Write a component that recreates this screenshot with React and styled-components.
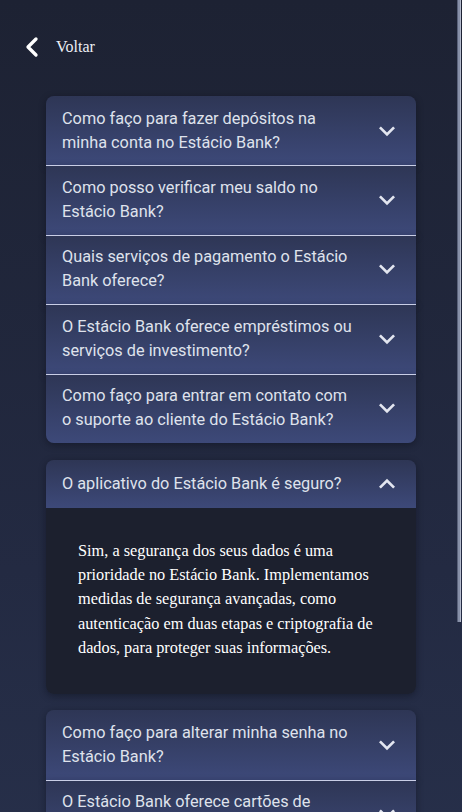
import React, { useState } from 'react';
import styled, { createGlobalStyle } from 'styled-components';
import { ChevronLeft } from 'lucide-react';

const GlobalStyle = createGlobalStyle`
  html {
    background: linear-gradient(180deg, #1d2233 0%, #232a42 55%, #29334f 100%);
    min-height: 100%;
  }
  body {
    margin: 0;
    font-family: "Liberation Serif", serif;
  }
  html::-webkit-scrollbar {
    display: none;
  }
`;

const faqs = [
  {
    q: 'Como faço para fazer depósitos na minha conta no Estácio Bank?',
    a: 'Você pode fazer depósitos por transferência, boleto ou Pix diretamente pelo aplicativo do Estácio Bank.'
  },
  {
    q: 'Como posso verificar meu saldo no Estácio Bank?',
    a: 'Seu saldo aparece na tela inicial do aplicativo, logo após o login.'
  },
  {
    q: 'Quais serviços de pagamento o Estácio Bank oferece?',
    a: 'Pix, boletos, transferências e pagamento de contas de consumo.'
  },
  {
    q: 'O Estácio Bank oferece empréstimos ou serviços de investimento?',
    a: 'Sim, consulte a área de produtos no aplicativo para conhecer as opções disponíveis.'
  },
  {
    q: 'Como faço para entrar em contato com o suporte ao cliente do Estácio Bank?',
    a: 'Pelo chat do aplicativo ou pelos canais de atendimento informados no site.'
  },
  {
    q: 'O aplicativo do Estácio Bank é seguro?',
    a: 'Sim, a segurança dos seus dados é uma prioridade no Estácio Bank. Implementamos medidas de segurança avançadas, como autenticação em duas etapas e criptografia de dados, para proteger suas informações.'
  },
  {
    q: 'Como faço para alterar minha senha no Estácio Bank?',
    a: 'Acesse o menu de perfil e escolha a opção de alterar senha.'
  },
  {
    q: 'O Estácio Bank oferece cartões de crédito?',
    a: 'Sim, você pode solicitar o seu cartão pelo aplicativo.'
  },
  {
    q: 'Quais são as taxas cobradas pelo Estácio Bank?',
    a: 'A conta digital não possui tarifa de manutenção.'
  },
  {
    q: 'Como posso encerrar minha conta no Estácio Bank?',
    a: 'Entre em contato com o suporte para solicitar o encerramento.'
  }
];

const ExpandIcon = ({ open }) => (
  <IconWrap $open={open}>
    <svg width="32" height="32" viewBox="0 0 24 24" fill="currentColor">
      <path d="M16.59 8.59 12 13.17 7.41 8.59 6 10l6 6 6-6z" />
    </svg>
  </IconWrap>
);

const App = () => {
  const [openIndex, setOpenIndex] = useState(5);

  return (
    <Page>
      <GlobalStyle />
      <BackLink href="#">
        <ChevronLeft size={32} strokeWidth={2.5} color="#ffffff" />
        <span>Voltar</span>
      </BackLink>

      <FaqList>
        {faqs.map((item, i) => {
          const open = openIndex === i;
          const prevOpen = openIndex === i - 1;
          const nextOpen = openIndex === i + 1;
          const roundTop = i === 0 || open || prevOpen;
          const roundBottom = i === faqs.length - 1 || open || nextOpen;
          return (
            <Item
              key={item.q}
              $open={open}
              $roundTop={roundTop}
              $roundBottom={roundBottom}
              $divider={!roundTop}
            >
              <Summary onClick={() => setOpenIndex(open ? -1 : i)}>
                <Question>{item.q}</Question>
                <ExpandIcon open={open} />
              </Summary>
              {open && <Answer>{item.a}</Answer>}
            </Item>
          );
        })}
      </FaqList>

      {/* thin scrollbar thumb drawn over the right edge */}
      <ScrollThumb />
    </Page>
  );
};

const Page = styled.div`
  position: relative;
  min-height: 100vh;
  padding: 31px 0 48px;
  box-sizing: border-box;
`;

const BackLink = styled.a`
  display: flex;
  align-items: center;
  gap: 8px;
  margin-left: 16px;
  height: 32px;
  width: fit-content;
  text-decoration: none;
  color: #eceef5;
  font-family: "Liberation Serif", serif;
  font-size: 16px;
`;

const FaqList = styled.div`
  width: 370px;
  margin: 33px 0 0 46px;
  display: flex;
  flex-direction: column;
`;

const Item = styled.div`
  position: relative;
  overflow: hidden;
  box-shadow: 0 2px 7px rgba(8, 10, 20, 0.4);
  border-top-left-radius: ${(p) => (p.$roundTop ? '8px' : '0')};
  border-top-right-radius: ${(p) => (p.$roundTop ? '8px' : '0')};
  border-bottom-left-radius: ${(p) => (p.$roundBottom ? '8px' : '0')};
  border-bottom-right-radius: ${(p) => (p.$roundBottom ? '8px' : '0')};
  margin: ${(p) => (p.$open ? '17px 0 16px' : '0')};

  &::before {
    content: '';
    display: ${(p) => (p.$divider ? 'block' : 'none')};
    position: absolute;
    top: 0;
    left: 0;
    right: 0;
    height: 1px;
    background: #c9cee6;
    z-index: 1;
  }
`;

const Summary = styled.div`
  display: flex;
  align-items: center;
  justify-content: space-between;
  min-height: 48px;
  padding: 10.7px 13px 10.7px 16px;
  box-sizing: border-box;
  cursor: pointer;
  background: linear-gradient(180deg, #2e3655 0%, #3d4979 100%);
`;

const Question = styled.p`
  margin: 0;
  padding-right: 13px;
  flex: 1;
  font-family: Roboto, "Liberation Sans", sans-serif;
  font-size: 16.3px;
  line-height: 24px;
  color: #dfe2ec;
`;

const IconWrap = styled.span`
  display: flex;
  align-items: center;
  height: 24px;
  color: #e3e6f0;
  transform: rotate(${(p) => (p.$open ? '180deg' : '0')});

  svg {
    flex-shrink: 0;
  }
`;

const Answer = styled.div`
  background: #1c202e;
  padding: 31px 32px 34px;
  font-family: "Liberation Serif", serif;
  font-size: 16.3px;
  line-height: 24.3px;
  color: #ffffff;
`;

const ScrollThumb = styled.div`
  position: absolute;
  top: 0;
  right: 1px;
  z-index: 10;
  width: 4px;
  height: 622px;
  background: #8790a8;
  border-left: 1px solid #5a627a;
  box-sizing: border-box;
  box-shadow: inset -1px 0 0 #b4bacc;
`;

export default App;
